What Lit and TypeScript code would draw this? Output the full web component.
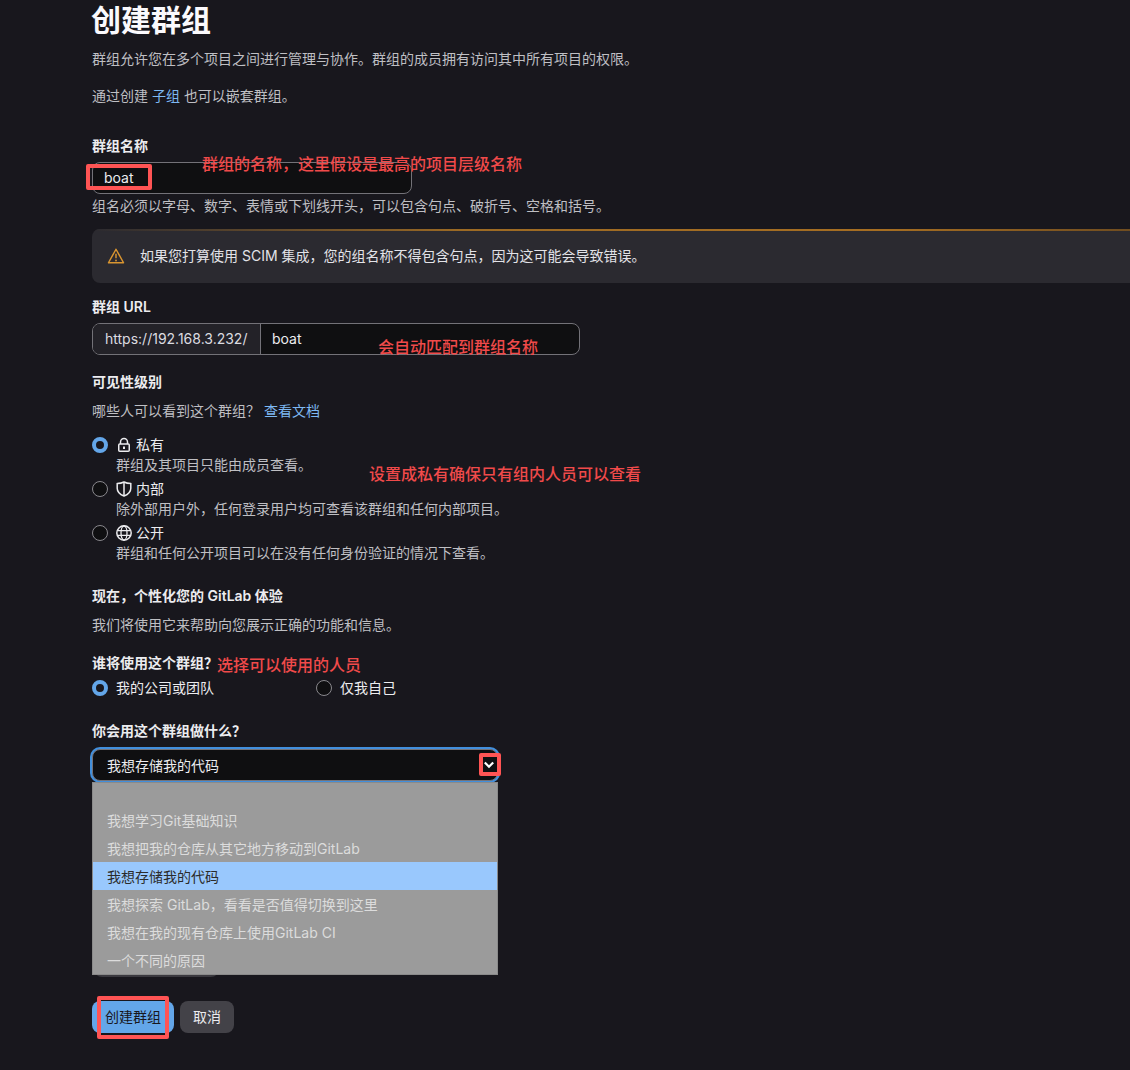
import { LitElement, html, css, svg } from "lit";
import { customElement } from "lit/decorators.js";

const lock = svg`<path d="M4.500 7V5a3.500 3.500 0 0 1 7 0v2" fill="none" stroke="currentColor" stroke-width="1.500"/><rect x="2.750" y="7" width="10.500" height="7.250" rx="1" fill="none" stroke="currentColor" stroke-width="1.500"/><rect x="7" y="9.500" width="2" height="2.500" fill="currentColor"/>`;
const shield = svg`<path d="M8 1c2 1 4.200 1.500 6.800 1.600v4.600c0 3.500-2.700 6.200-6.800 7.800-4.100-1.600-6.800-4.300-6.800-7.800V2.600C3.800 2.500 6 2 8 1z" fill="none" stroke="currentColor" stroke-width="1.500"/><path d="M8 2v12.500" stroke="currentColor" stroke-width="1.500"/>`;
const globe = svg`<circle cx="8" cy="8" r="7.200" fill="none" stroke="currentColor" stroke-width="1.500"/><ellipse cx="8" cy="8" rx="3" ry="7" fill="none" stroke="currentColor" stroke-width="1.300"/><path d="M1.300 5.700h13.400M1.300 10.300h13.400" stroke="currentColor" stroke-width="1.300"/>`;

@customElement("app-root")
export class AppRoot extends LitElement {
  static styles = css`
    :host { display: block; }
    .page {
      position: relative; width: 1130px; height: 1070px; overflow: hidden; box-sizing: border-box;
      padding-left: 92px; background: #18171d; color: #ececef;
      font: 14px/20px Inter, "Noto Sans CJK SC", sans-serif;
    }
    h1 { margin: 0 0 0 -1px; font-size: 30px; line-height: 40px; font-weight: 600; color: #fbfafd; }
    p { margin: 0; height: 20px; white-space: nowrap; }
    .muted { color: #bfbfc3; }
    a { color: #7db8f2; text-decoration: none; }
    .label { font-weight: 600; height: 20px; white-space: nowrap; }
    .intro1 { margin-top: 9px; }
    .intro2 { margin-top: 17px; }
    .name-label { margin-top: 30px; }
    .field {
      box-sizing: border-box; height: 32px; margin-top: 6px; border: 1px solid #737278; border-radius: 8px;
      background: #0f0f11; display: flex; align-items: center; line-height: 30px;
    }
    .name-field { width: 320px; padding-left: 11px; }
    .help { margin-top: 2px; }
    .alert {
      box-sizing: border-box; height: 54px; margin-top: 13px; margin-right: -20px; padding-left: 15px;
      border-radius: 8px; background: #2b2a30; position: relative; overflow: hidden;
      display: flex; align-items: center; gap: 15px; color: #e3e3e8;
    }
    .alert::before {
      content: ""; position: absolute; left: 0; right: 0; top: 0; height: 2px;
      background: linear-gradient(90deg, #2b2a30 0%, #9c6a24 35%, #a66e22 75%, #6b4a20 100%);
    }
    .alert svg { width: 18px; height: 18px; flex: none; color: #d99530; }
    .url-label { margin-top: 14px; }
    .url-field { width: 488px; overflow: hidden; }
    .prefix {
      box-sizing: border-box; width: 168px; height: 100%; padding-left: 12px; flex: none;
      background: #232228; border-right: 1px solid #737278; color: #dcdce0; white-space: nowrap;
    }
    .url-value { padding-left: 11px; }
    .vis-label { margin-top: 17px; }
    .vis-help { margin-top: 9px; }
    .radio-list { margin-top: 14px; display: flex; flex-direction: column; gap: 4px; }
    .radio-row { display: flex; align-items: center; gap: 8px; height: 20px; white-space: nowrap; }
    .radio {
      box-sizing: border-box; width: 16px; height: 16px; border-radius: 50%; flex: none;
      border: 1px solid #89888d; background: #0f0f11;
    }
    .radio.on { border: 4.500px solid #63a6e9; background: #18171d; }
    .title { display: flex; align-items: center; gap: 4px; }
    .title svg { width: 16px; height: 16px; color: #ececef; flex: none; }
    .desc { padding-left: 24px; color: #bfbfc3; height: 20px; white-space: nowrap; }
    .now { margin-top: 23px; }
    .now-help { margin-top: 9px; }
    .who { margin-top: 18px; }
    .who-row { margin-top: 5px; display: grid; grid-template-columns: 224px 200px; }
    .use { margin-top: 23px; }
    .select-wrap { position: relative; width: 406px; margin-top: 8px; }
    .select {
      box-sizing: border-box; height: 32px; border: 1px solid #737278; border-radius: 8px;
      background: #0f0f11; box-shadow: 0 0 0 2px #428fdc; padding-left: 14px;
      display: flex; align-items: center; justify-content: space-between;
    }
    .select span { margin-top: 2px; }
    .select svg { width: 16px; height: 16px; color: #fff; }
    .peek {
      position: absolute; left: 2px; top: 200px; width: 125px; height: 28px; border-radius: 8px;
      background: #3a393f;
    }
    .menu {
      position: absolute; left: 0; top: 33px; width: 406px; height: 193px; box-sizing: border-box;
      background: #9b9b9b; color: #dcdcdc; border: 1px solid #8a8a8a; padding-top: 23px;
    }
    .opt { height: 28px; line-height: 30px; padding-left: 14px; white-space: nowrap; }
    .opt.sel { background: #99c8fd; color: #2b2b2b; }
    .actions { margin-top: 220px; display: flex; gap: 6px; }
    .btn { height: 32px; line-height: 32px; border-radius: 8px; text-align: center; }
    .primary { width: 82px; background: #63a6e9; color: #18171d; }
    .cancel { width: 54px; background: #434248; color: #ececef; }
    .note { position: absolute; color: #f04a4a; font-size: 16px; line-height: 22px; font-weight: 500; white-space: nowrap; }
    .n1 { left: 202px; top: 153px; }
    .n2 { left: 378px; top: 336px; }
    .n3 { left: 369px; top: 463px; }
    .n4 { left: 217px; top: 654px; }
    .box { position: absolute; box-sizing: border-box; border: 4px solid #ff5454; border-radius: 2px; }
    .b1 { left: 86px; top: 164px; width: 66px; height: 26px; }
    .b2 { left: 479px; top: 753px; width: 22px; height: 23px; }
    .b3 { left: 97px; top: 996px; width: 72px; height: 43px; }
  `;

  private radio(on: boolean, title: unknown) {
    return html`<div class="radio-row"><span class="radio ${on ? "on" : ""}"></span><span class="title">${title}</span></div>`;
  }

  private icon(content: unknown) {
    return html`<svg viewBox="0 0 16 16">${content}</svg>`;
  }

  render() {
    const opts = ["我想学习Git基础知识", "我想把我的仓库从其它地方移动到GitLab", "我想存储我的代码", "我想探索 GitLab，看看是否值得切换到这里", "我想在我的现有仓库上使用GitLab CI", "一个不同的原因"];
    return html`<div class="page">
      <h1>创建群组</h1>
      <p class="muted intro1">群组允许您在多个项目之间进行管理与协作。群组的成员拥有访问其中所有项目的权限。</p>
      <p class="muted intro2">通过创建 <a>子组</a> 也可以嵌套群组。</p>

      <div class="label name-label">群组名称</div>
      <div class="field name-field">boat</div>
      <p class="muted help">组名必须以字母、数字、表情或下划线开头，可以包含句点、破折号、空格和括号。</p>

      <div class="alert">
        <svg viewBox="0 0 16 16"><path d="M8 2 1.300 14h13.400z" fill="none" stroke="currentColor" stroke-width="1.300" stroke-linejoin="round"/><path d="M8 6v4" stroke="currentColor" stroke-width="1.300"/><circle cx="8" cy="12" r=".8" fill="currentColor"/></svg>
        <span>如果您打算使用 SCIM 集成，您的组名称不得包含句点，因为这可能会导致错误。</span>
      </div>

      <div class="label url-label">群组 URL</div>
      <div class="field url-field"><span class="prefix">https://192.168.3.232/</span><span class="url-value">boat</span></div>

      <div class="label vis-label">可见性级别</div>
      <p class="muted vis-help">哪些人可以看到这个群组？ <a>查看文档</a></p>
      <div class="radio-list">
        <div>${this.radio(true, html`${this.icon(lock)}私有`)}<div class="desc">群组及其项目只能由成员查看。</div></div>
        <div>${this.radio(false, html`${this.icon(shield)}内部`)}<div class="desc">除外部用户外，任何登录用户均可查看该群组和任何内部项目。</div></div>
        <div>${this.radio(false, html`${this.icon(globe)}公开`)}<div class="desc">群组和任何公开项目可以在没有任何身份验证的情况下查看。</div></div>
      </div>

      <div class="label now">现在，个性化您的 GitLab 体验</div>
      <p class="muted now-help">我们将使用它来帮助向您展示正确的功能和信息。</p>

      <div class="label who">谁将使用这个群组？</div>
      <div class="who-row">${this.radio(true, "我的公司或团队")}${this.radio(false, "仅我自己")}</div>

      <div class="label use">你会用这个群组做什么？</div>
      <div class="select-wrap">
        <div class="peek"></div>
        <div class="select"><span>我想存储我的代码</span>
          <svg viewBox="0 0 16 16"><path d="M3.800 5.500 8 9.700 12.200 5.500" fill="none" stroke="currentColor" stroke-width="2.200"/></svg>
        </div>
        <div class="menu">${opts.map((o, i) => html`<div class="opt ${i === 2 ? "sel" : ""}">${o}</div>`)}</div>
      </div>

      <div class="actions"><div class="btn primary">创建群组</div><div class="btn cancel">取消</div></div>

      <div class="note n1">群组的名称，这里假设是最高的项目层级名称</div>
      <div class="note n2">会自动匹配到群组名称</div>
      <div class="note n3">设置成私有确保只有组内人员可以查看</div>
      <div class="note n4">选择可以使用的人员</div>
      <div class="box b1"></div><div class="box b2"></div><div class="box b3"></div>
    </div>`;
  }
}
